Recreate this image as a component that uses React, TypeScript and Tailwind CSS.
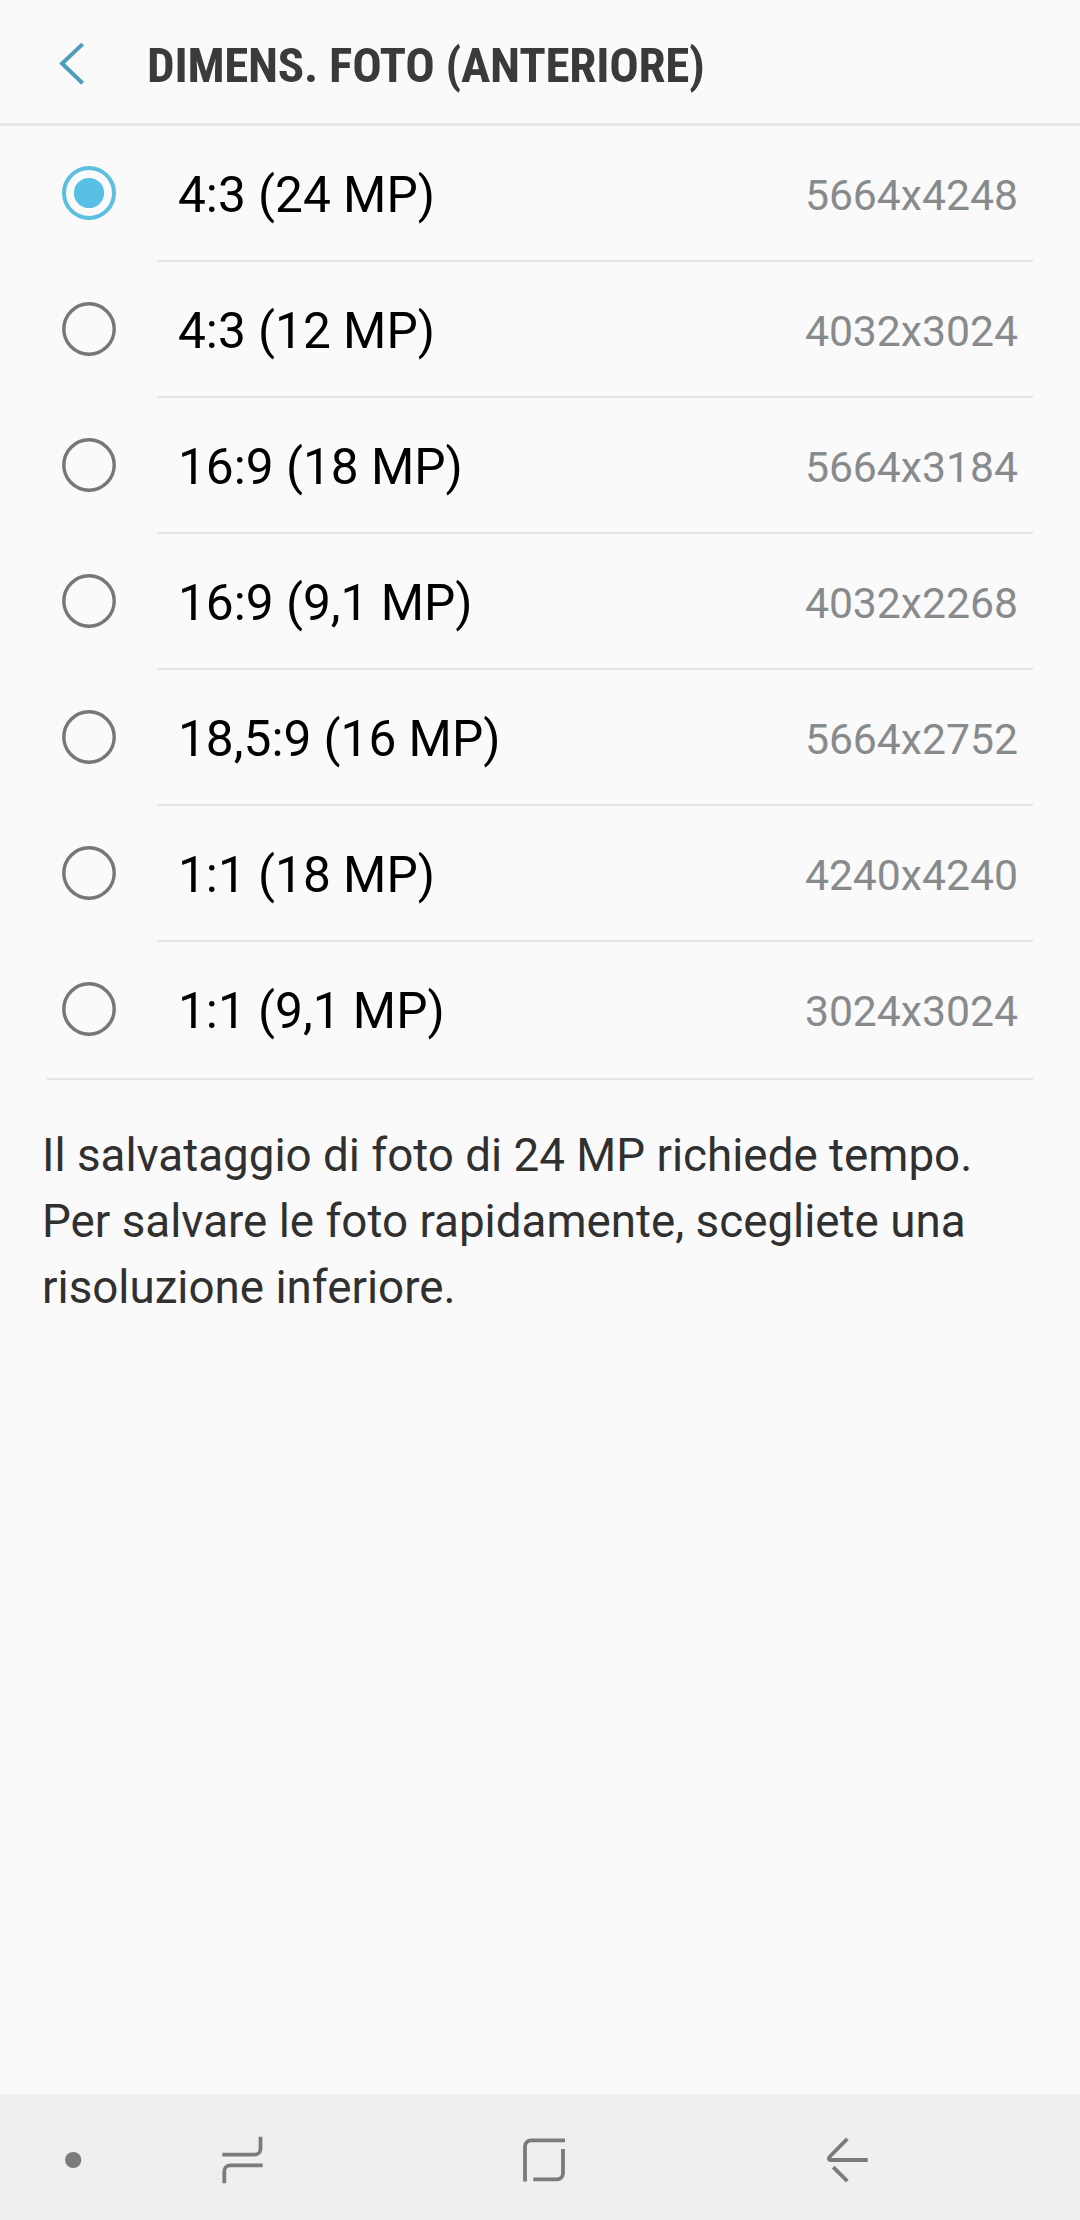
const sizes = [
  { label: "4:3 (24 MP)", resolution: "5664x4248" },
  { label: "4:3 (12 MP)", resolution: "4032x3024" },
  { label: "16:9 (18 MP)", resolution: "5664x3184" },
  { label: "16:9 (9,1 MP)", resolution: "4032x2268" },
  { label: "18,5:9 (16 MP)", resolution: "5664x2752" },
  { label: "1:1 (18 MP)", resolution: "4240x4240" },
  { label: "1:1 (9,1 MP)", resolution: "3024x3024" },
];

function Radio({ checked }: { checked: boolean }) {
  return (
    <svg width="56" height="56" viewBox="0 0 56 56" fill="none" className="mb-[2px] shrink-0">
      <circle
        cx="28"
        cy="28"
        r={checked ? 25 : 25.2}
        stroke={checked ? "#5cbfe0" : "#777777"}
        strokeWidth={checked ? 4 : 3.4}
      />
      {checked && <circle cx="28" cy="28" r="15.1" fill="#58c0e4" />}
    </svg>
  );
}

function NavBar() {
  return (
    <nav className="mt-auto flex h-[126px] shrink-0 items-center bg-[#efefef] pt-[6px] pl-[64px]">
      <svg width="18" height="18" viewBox="0 0 18 18" fill="#7b7b7b">
        <circle cx="9.2" cy="9" r="8.1" />
      </svg>

      {/* Recents */}
      <svg width="42" height="48" viewBox="0 0 42 48" fill="none" stroke="#7b7b7b" strokeWidth="3.8" className="ml-[140px]">
        <path d="M0.3 18.7H32.5a6 6 0 0 0 6-6V0.7" />
        <path d="M40.7 29.3H8.3a6 6 0 0 0-6 6V47.3" />
      </svg>

      {/* Home */}
      <svg width="44" height="48" viewBox="0 0 44 48" fill="none" stroke="#7b7b7b" strokeWidth="3.8" className="ml-[258px]">
        <path d="M43 4.4H9a6 6 0 0 0-6 6V45.6" />
        <path d="M41 13V37.3a6 6 0 0 1-6 6H11.3" />
      </svg>

      {/* Back */}
      <svg width="44" height="48" viewBox="0 0 44 48" fill="none" stroke="#7b7b7b" strokeWidth="3.8" className="ml-[260px]">
        <path d="M41.7 24H4.2c-1.5 0-1.8-2-.8-3L21.3 2.9" strokeLinejoin="round" />
        <path d="M7.2 31.1 21.3 45.2" />
      </svg>
    </nav>
  );
}

export default function App() {
  return (
    <div className="flex h-[2220px] w-[1080px] flex-col bg-[#fafafa] font-['Roboto',sans-serif]">
      <header className="flex h-[126px] shrink-0 items-center border-b-3 border-[#e6e6e6] pl-[58px]">
        <svg
          width="28"
          height="43"
          viewBox="0 0 28 43"
          fill="none"
          stroke="#4e9dbc"
          strokeWidth="4"
          className="mt-[4px]"
        >
          <path d="M24.6 2.1 4.1 21.5l20.5 19.7" />
        </svg>
        <h1 className="ml-[61px] pt-[8px] text-[49px] font-bold tracking-[-0.25px] text-[#3a3a3a] [font-stretch:75%]">
          DIMENS. FOTO (ANTERIORE)
        </h1>
      </header>

      <ul className="flex flex-col">
        {sizes.map((size, i) => (
          <li key={size.label} className="group flex h-[136px] items-center pl-[61px]">
            <Radio checked={i === 0} />
            <div className="ml-[40px] flex h-full w-[876px] items-center justify-between border-b-2 border-[#e5e5e5] pt-[4px] pr-[15px] pl-[21px] group-last:border-transparent">
              <span className="text-[49.6px] text-black">{size.label}</span>
              <span className="text-[42.7px] text-[#888b8d]">{size.resolution}</span>
            </div>
          </li>
        ))}
      </ul>
      <hr className="mx-[47px] border-t-2 border-[#e5e5e5]" />

      <p className="px-[42px] pt-[43px] text-[45.75px] leading-[66px] text-[#303030]">
        Il salvataggio di foto di 24 MP richiede tempo. Per salvare le foto rapidamente, scegliete una risoluzione inferiore.
      </p>

      <NavBar />
    </div>
  );
}
